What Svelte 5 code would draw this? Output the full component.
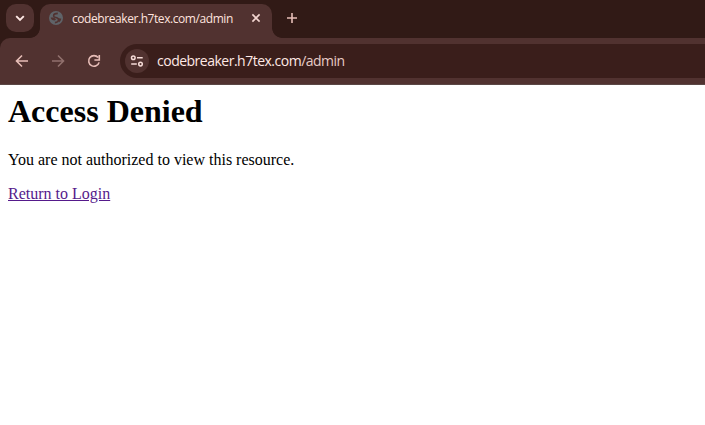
<script>
  const host = 'codebreaker.h7tex.com';
  const path = '/admin';
</script>

<div class="browser">
  <div class="tabstrip">
    <button class="search" aria-label="Search tabs">
      <svg width="28" height="28" viewBox="0 0 28 28"><path d="M10.2 12.2 14 16l3.8-3.8" stroke="#ffe9e5" stroke-width="1.9" fill="none" /></svg>
    </button>
    <div class="tab">
      <svg class="globe" width="14" height="14" viewBox="0 0 14 14">
        <circle cx="7" cy="7" r="7" fill="#5f6368" />
        <path d="M8.8 2.4C6.6 2.4 4.6 3.2 4.6 4.9c0 2.1 4.9 1.1 4.9 3.7 0 1.9-1.6 3-3.6 3" fill="none" stroke="#513230" stroke-width="1.6" />
        <path d="M1.7 6.6c2.4 0 4.4.3 5.3 1.8L5.6 9.6C3.4 9.6 1.9 8.4 1.7 6.6zM8.4 6.5c1.4.9 2.5 1.2 3.9.9-.2 1.6-1 2.9-2.2 3.8z" fill="#513230" />
      </svg>
      <span class="title">{host}{path}</span>
      <svg class="close" width="10" height="10" viewBox="0 0 10 10"><path d="m1.4 1.4 7.2 7.2m0-7.2L1.4 8.6" stroke="#f3d5d0" stroke-width="1.6" /></svg>
    </div>
    <svg class="plus" width="12" height="12" viewBox="0 0 12 12"><path d="M1 6h10M6 1v10" stroke="#e7bdb7" stroke-width="1.6" /></svg>
  </div>
  <div class="toolbar">
    <svg class="nav" width="16" height="16" viewBox="0 0 16 16"><path d="M14 8H3M8 2.5 2.5 8 8 13.5" stroke="#e7bdb7" stroke-width="1.6" fill="none" /></svg>
    <svg class="nav" width="16" height="16" viewBox="0 0 16 16"><path d="M2 8h11M8 2.5 13.5 8 8 13.5" stroke="#91706d" stroke-width="1.6" fill="none" /></svg>
    <svg class="nav" width="16" height="16" viewBox="0 0 16 16"><path d="M12.1 4.6A5.3 5.3 0 1 0 13.1 9.4M13.3 2v5H8.4" stroke="#e7bdb7" stroke-width="1.6" fill="none" /></svg>
    <div class="omnibox">
      <span class="site">
        <svg width="14" height="14" viewBox="0 0 14 14" fill="none" stroke="#f6dcd8" stroke-width="1.5"><circle cx="3.3" cy="3.7" r="1.8" /><path d="M7 3.7h5.7M1.2 10.1h5.6" /><circle cx="10.5" cy="10.1" r="1.8" /></svg>
      </span>
      <span class="url">{host}<span class="path">{path}</span></span>
    </div>
  </div>
</div>
<main>
  <h1>Access Denied</h1>
  <p>You are not authorized to view this resource.</p>
  <a href="#login">Return to Login</a>
</main>

<style>
  :global(body) { margin: 0; background: #fff; overflow: hidden; }
  .browser { background: #311a16; font-family: 'Open Sans', 'Noto Sans', sans-serif; }
  .tabstrip { height: 38px; display: flex; box-sizing: border-box; padding: 4px 0 0 6px; }
  .search { width: 28px; height: 28px; border: 0; padding: 0; border-radius: 10px; background: #513230; }
  .search svg { display: block; }
  .tab {
    position: relative; margin-left: 6px; width: 232px; height: 34px; box-sizing: border-box;
    padding: 0 11px 6px 9px; display: flex; align-items: center;
    background: #513230; border-radius: 10px 10px 0 0;
  }
  .tab::before, .tab::after { content: ''; position: absolute; bottom: 0; width: 10px; height: 10px; }
  .tab::before { left: -10px; background: radial-gradient(circle at 0 0, transparent 9.5px, #513230 10.2px); }
  .tab::after { right: -10px; background: radial-gradient(circle at 100% 0, transparent 9.5px, #513230 10.2px); }
  .title { margin-left: 9px; padding-top: 2px; font-size: 12px; line-height: 16px; letter-spacing: -0.43px; color: #ffe3df; white-space: nowrap; }
  .close { margin-left: auto; }
  .plus { margin: 8px 0 0 14px; }
  .toolbar {
    height: 47px; box-sizing: border-box; padding: 6px 0 6px 14px; display: flex; align-items: flex-start;
    background: #513230; border-bottom: 1px solid #5b4745; border-top-left-radius: 10px;
  }
  .nav { margin: 9px 20px 0 0; flex: none; }
  .omnibox {
    flex: 1; height: 34px; margin-left: -2px; box-sizing: border-box; padding-left: 5px;
    display: flex; align-items: center; background: #3a1e1b; border-radius: 17px 0 0 17px;
  }
  .site { width: 24px; height: 24px; border-radius: 50%; background: #513230; display: grid; place-items: center; }
  .url { margin-left: 8px; font-size: 14px; line-height: 20px; letter-spacing: -0.5px; color: #ffe9e5; white-space: nowrap; }
  .path { color: #e7cbc6; }
  main { padding: 8px; font-family: 'Liberation Serif', 'Times New Roman', serif; font-size: 16px; line-height: 18px; color: #000; }
  h1 { margin: 0; font-size: 32px; line-height: 37px; }
  p { margin: 21px 0 16px; }
  a { color: #551a8b; }
</style>
